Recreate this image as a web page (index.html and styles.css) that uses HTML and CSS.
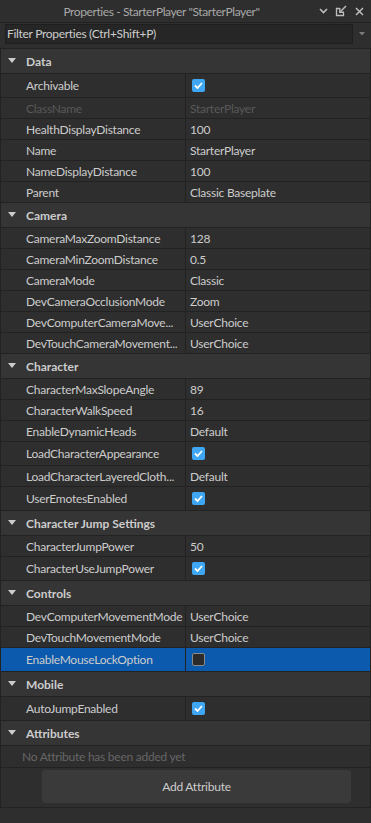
FILE: index.html
```html
<!DOCTYPE html>
<html>
<head>
<meta charset="utf-8">
<link rel="stylesheet" href="styles.css">
</head>
<body>
<div class="panel">
  <div class="titlebar">
    <div class="title">Properties - StarterPlayer "StarterPlayer"</div>
    <div class="tb-icons">
      <span class="tb-icon"><svg width="9" height="6" viewBox="0 0 9 6"><path d="M1 1 L4.5 4.5 L8 1" stroke="#bdbdbd" stroke-width="1.6" fill="none"/></svg></span>
      <span class="tb-icon"><svg width="12" height="12" viewBox="0 0 12 12"><path d="M4.5 3.5 H1.5 V10.5 H8.5 V7.5" stroke="#bdbdbd" stroke-width="1.3" fill="none"/><path d="M11 1 L5.5 6.5" stroke="#bdbdbd" stroke-width="1.4" fill="none"/><path d="M4.8 3 V7.2 H9" stroke="#bdbdbd" stroke-width="1.4" fill="none"/></svg></span>
      <span class="tb-icon"><svg width="9" height="9" viewBox="0 0 9 9"><path d="M1 1 L8 8 M8 1 L1 8" stroke="#bdbdbd" stroke-width="1.5" fill="none"/></svg></span>
    </div>
  </div>
  <div class="filterbar">
    <div class="filter-input">Filter Properties (Ctrl+Shift+P)</div>
    <div class="filter-drop"><svg width="6" height="4" viewBox="0 0 6 4"><path d="M0 0 H6 L3 3.5 Z" fill="#7a7a7a"/></svg></div>
  </div>
  <div class="list">
    <div class="section-head"><span class="tri"></span>Data</div>
    <div class="row chk"><div class="name">Archivable</div><div class="val"><span class="cb on"><svg width="9" height="7" viewBox="0 0 9 7"><path d="M1 3.5 L3.5 6 L8 1" stroke="#fff" stroke-width="1.8" fill="none"/></svg></span></div></div>
    <div class="row dis"><div class="name">ClassName</div><div class="val">StarterPlayer</div></div>
    <div class="row"><div class="name">HealthDisplayDistance</div><div class="val">100</div></div>
    <div class="row"><div class="name">Name</div><div class="val">StarterPlayer</div></div>
    <div class="row"><div class="name">NameDisplayDistance</div><div class="val">100</div></div>
    <div class="row"><div class="name">Parent</div><div class="val">Classic Baseplate</div></div>

    <div class="section-head"><span class="tri"></span>Camera</div>
    <div class="row"><div class="name">CameraMaxZoomDistance</div><div class="val">128</div></div>
    <div class="row"><div class="name">CameraMinZoomDistance</div><div class="val">0.5</div></div>
    <div class="row"><div class="name">CameraMode</div><div class="val">Classic</div></div>
    <div class="row"><div class="name">DevCameraOcclusionMode</div><div class="val">Zoom</div></div>
    <div class="row"><div class="name">DevComputerCameraMove...</div><div class="val">UserChoice</div></div>
    <div class="row"><div class="name">DevTouchCameraMovement...</div><div class="val">UserChoice</div></div>

    <div class="section-head"><span class="tri"></span>Character</div>
    <div class="row"><div class="name">CharacterMaxSlopeAngle</div><div class="val">89</div></div>
    <div class="row"><div class="name">CharacterWalkSpeed</div><div class="val">16</div></div>
    <div class="row"><div class="name">EnableDynamicHeads</div><div class="val">Default</div></div>
    <div class="row chk"><div class="name">LoadCharacterAppearance</div><div class="val"><span class="cb on"><svg width="9" height="7" viewBox="0 0 9 7"><path d="M1 3.5 L3.5 6 L8 1" stroke="#fff" stroke-width="1.8" fill="none"/></svg></span></div></div>
    <div class="row"><div class="name">LoadCharacterLayeredCloth...</div><div class="val">Default</div></div>
    <div class="row chk"><div class="name">UserEmotesEnabled</div><div class="val"><span class="cb on"><svg width="9" height="7" viewBox="0 0 9 7"><path d="M1 3.5 L3.5 6 L8 1" stroke="#fff" stroke-width="1.8" fill="none"/></svg></span></div></div>

    <div class="section-head"><span class="tri"></span>Character Jump Settings</div>
    <div class="row"><div class="name">CharacterJumpPower</div><div class="val">50</div></div>
    <div class="row chk"><div class="name">CharacterUseJumpPower</div><div class="val"><span class="cb on"><svg width="9" height="7" viewBox="0 0 9 7"><path d="M1 3.5 L3.5 6 L8 1" stroke="#fff" stroke-width="1.8" fill="none"/></svg></span></div></div>

    <div class="section-head"><span class="tri"></span>Controls</div>
    <div class="row"><div class="name">DevComputerMovementMode</div><div class="val">UserChoice</div></div>
    <div class="row"><div class="name">DevTouchMovementMode</div><div class="val">UserChoice</div></div>
    <div class="row chk sel"><div class="name">EnableMouseLockOption</div><div class="val"><span class="cb off"></span></div></div>

    <div class="section-head"><span class="tri"></span>Mobile</div>
    <div class="row chk"><div class="name">AutoJumpEnabled</div><div class="val"><span class="cb on"><svg width="9" height="7" viewBox="0 0 9 7"><path d="M1 3.5 L3.5 6 L8 1" stroke="#fff" stroke-width="1.8" fill="none"/></svg></span></div></div>

    <div class="section-head"><span class="tri"></span>Attributes</div>
    <div class="attr-empty">No Attribute has been added yet</div>
    <div class="attr-btn-row"><div class="attr-btn">Add Attribute</div></div>
  </div>
</div>
</body>
</html>
```

FILE: styles.css
```css
* { box-sizing: border-box; }
html, body {
  margin: 0;
  padding: 0;
  background: #2e2e2e;
}
body {
  font-family: Lato, "Liberation Sans", sans-serif;
  font-size: 12px;
  letter-spacing: -0.25px;
  color: #cccccc;
}
.panel {
  width: 371px;
  height: 823px;
  overflow: hidden;
  background: #2e2e2e;
}
.titlebar {
  height: 23px;
  display: flex;
  align-items: center;
  border-bottom: 1px solid #222222;
  background: #2e2e2e;
}
.title {
  flex: 1;
  text-align: center;
  color: #a8a8a8;
  font-size: 12px;
  letter-spacing: -0.4px;
  padding-left: 9px;
  white-space: nowrap;
}
.tb-icons {
  display: flex;
  align-items: center;
  padding-right: 3px;
}
.tb-icon {
  width: 18px;
  height: 22px;
  display: flex;
  align-items: center;
  justify-content: center;
}
.filterbar {
  height: 25px;
  display: flex;
  align-items: flex-start;
  padding-top: 1px;
}
.filter-input {
  margin-left: 5px;
  width: 348px;
  height: 20px;
  background: #262626;
  border: 1px solid #1f1f1f;
  padding-left: 1px;
  line-height: 18px;
  font-size: 12px;
  letter-spacing: -0.3px;
  color: #cccccc;
  white-space: nowrap;
}
.filter-drop {
  flex: 1;
  display: flex;
  justify-content: center;
  padding-top: 8px;
}
.list {
  border-top: 1px solid #222222;
  border-left: 1px solid #222222;
  border-right: 1px solid #222222;
}
.section-head {
  height: 25px;
  background: #353535;
  border-bottom: 1px solid #222222;
  display: flex;
  align-items: center;
  padding-left: 7px;
  font-weight: bold;
  letter-spacing: 0;
  color: #cccccc;
}
.tri {
  width: 0;
  height: 0;
  border-left: 4px solid transparent;
  border-right: 4px solid transparent;
  border-top: 5px solid #cccccc;
  margin-right: 10px;
  margin-top: -1px;
}
.row {
  display: flex;
  height: 21px;
  border-bottom: 1px solid #222222;
  background: #2e2e2e;
}
.row.chk { height: 24px; }
.row.sel { background: #0b5aad; }
.name {
  width: 185px;
  flex: none;
  border-right: 1px solid #222222;
  padding-left: 25px;
  display: flex;
  align-items: center;
  white-space: nowrap;
  overflow: hidden;
}
.val {
  flex: 1;
  padding-left: 4px;
  display: flex;
  align-items: center;
  white-space: nowrap;
}
.row.dis .name, .row.dis .val { color: #595959; }
.cb {
  width: 13px;
  height: 13px;
  border-radius: 2px;
  margin-left: 2px;
  display: flex;
  align-items: center;
  justify-content: center;
}
.cb.on { background: #3ea6f2; }
.cb.off {
  background: #2b2b2b;
  border: 1px solid #8a8a8a;
}
.attr-empty {
  height: 22px;
  border-bottom: 1px solid #222222;
  padding-left: 21px;
  display: flex;
  align-items: center;
  color: #666666;
}
.attr-btn-row {
  height: 40px;
  border-bottom: 1px solid #222222;
  padding: 2px 19px 0 41px;
}
.attr-btn {
  height: 33px;
  background: #3a3a3a;
  border-radius: 3px;
  display: flex;
  align-items: center;
  justify-content: center;
  color: #cccccc;
}
```
